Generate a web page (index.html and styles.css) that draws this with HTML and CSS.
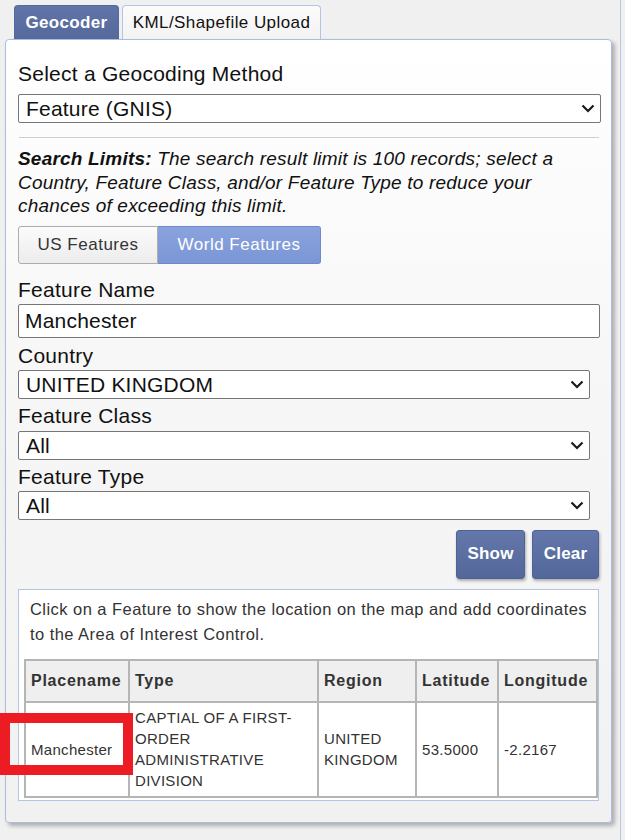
FILE: index.html
```html
<!DOCTYPE html>
<html>
<head>
<meta charset="utf-8">
<link rel="stylesheet" href="styles.css">
</head>
<body>
<div class="page">
  <div class="tabs">
    <div class="tab tab-active">Geocoder</div>
    <div class="tab">KML/Shapefile Upload</div>
  </div>
  <div class="panel">
    <div class="label label-first">Select a Geocoding Method</div>
    <div class="select-wrap select-wide">
      <select class="select"><option>Feature (GNIS)</option></select>
      <svg class="chev" width="14" height="9" viewBox="0 0 14 9"><polyline points="1.5,1.5 7,7 12.5,1.5" fill="none" stroke="#1a1a1a" stroke-width="2.2"/></svg>
    </div>
    <div class="divider"></div>
    <p class="limits"><b>Search Limits:</b> The search result limit is 100 records; select a<br>Country, Feature Class, and/or Feature Type to reduce your<br>chances of exceeding this limit.</p>
    <div class="toggle">
      <button class="tog">US Features</button>
      <button class="tog tog-on">World Features</button>
    </div>
    <div class="label label-name">Feature Name</div>
    <input class="text-input" type="text" value="Manchester">
    <div class="label label-country">Country</div>
    <div class="select-wrap">
      <select class="select"><option>UNITED KINGDOM</option></select>
      <svg class="chev" width="14" height="9" viewBox="0 0 14 9"><polyline points="1.5,1.5 7,7 12.5,1.5" fill="none" stroke="#1a1a1a" stroke-width="2.2"/></svg>
    </div>
    <div class="label label-class">Feature Class</div>
    <div class="select-wrap">
      <select class="select"><option>All</option></select>
      <svg class="chev" width="14" height="9" viewBox="0 0 14 9"><polyline points="1.5,1.5 7,7 12.5,1.5" fill="none" stroke="#1a1a1a" stroke-width="2.2"/></svg>
    </div>
    <div class="label label-type">Feature Type</div>
    <div class="select-wrap">
      <select class="select"><option>All</option></select>
      <svg class="chev" width="14" height="9" viewBox="0 0 14 9"><polyline points="1.5,1.5 7,7 12.5,1.5" fill="none" stroke="#1a1a1a" stroke-width="2.2"/></svg>
    </div>
    <div class="actions">
      <button class="btn btn-show">Show</button>
      <button class="btn btn-clear">Clear</button>
    </div>
    <div class="results">
      <p class="hint">Click on a Feature to show the location on the map and add coordinates<br>to the Area of Interest Control.</p>
      <table class="grid">
        <colgroup>
          <col class="c1"><col class="c2"><col class="c3"><col class="c4"><col class="c5">
        </colgroup>
        <thead>
          <tr><th>Placename</th><th>Type</th><th>Region</th><th>Latitude</th><th>Longitude</th></tr>
        </thead>
        <tbody>
          <tr>
            <td>Manchester</td>
            <td>CAPTIAL OF A FIRST-ORDER ADMINISTRATIVE DIVISION</td>
            <td>UNITED KINGDOM</td>
            <td>53.5000</td>
            <td>-2.2167</td>
          </tr>
        </tbody>
      </table>
    </div>
  </div>
  <div class="annotation"></div>
</div>
</body>
</html>
```

FILE: styles.css
```css
* { box-sizing: border-box; }
html, body { margin: 0; padding: 0; background: #f0f0f0; }
body { font-family: "Liberation Sans", Arial, sans-serif; color: #111; }

.page {
  position: relative;
  width: 621px;
  min-height: 840px;
  padding: 5px 0 0 5px;
  border-right: 1px solid #b7c6e6;
}

.tabs {
  display: flex;
  gap: 3px;
  margin-left: 9px;
  height: 34px;
  position: relative;
  z-index: 2;
}
.tab {
  height: 34px;
  padding: 0 8px;
  font-size: 17px;
  letter-spacing: 0.42px;
  line-height: 33px;
  white-space: nowrap;
  text-align: center;
  border: 1px solid #b4c4e4;
  border-bottom: none;
  border-radius: 4px 4px 0 0;
  background: linear-gradient(#fbfbfb, #f3f3f3);
  color: #111;
  width: 199px;
}
.tab-active {
  width: 105px;
  font-weight: bold;
  letter-spacing: 0.35px;
  color: #fff;
  background: linear-gradient(#6074a8, #55699b);
  border-color: #5369a0;
}

.panel {
  position: relative;
  width: 607px;
  height: 784px;
  border: 1px solid #a9bde4;
  border-radius: 4px;
  background: linear-gradient(#ffffff 0%, #f7f7f7 40%, #f1f1f1 100%);
  box-shadow: 3px 3px 4px rgba(0,0,0,0.28);
  padding: 22px 11px 0 12px;
  display: flex;
  flex-direction: column;
  align-items: flex-start;
}

.label {
  font-size: 21px;
  letter-spacing: 0.25px;
  line-height: 24px;
  color: #111;
}
.label-first { margin-bottom: 8px; }
.label-name { margin-top: 14px; margin-bottom: 2px; }
.label-country { margin-top: 6px; margin-bottom: 2px; }
.label-class { margin-top: 5px; margin-bottom: 3px; }
.label-type { margin-top: 5px; margin-bottom: 2px; }

.select-wrap {
  position: relative;
  width: 572px;
  height: 29px;
}
.select-wide { width: 583px; }
.select {
  appearance: none;
  -webkit-appearance: none;
  width: 100%;
  height: 29px;
  margin: 0;
  padding: 0 30px 0 7px;
  border: 1px solid #767676;
  border-radius: 2px;
  background: #fff;
  font-family: "Liberation Sans", Arial, sans-serif;
  font-size: 21px;
  letter-spacing: 0.2px;
  line-height: 27px;
  color: #111;
}
.chev {
  position: absolute;
  right: 6px;
  top: 10px;
}

.divider {
  width: 580px;
  margin-left: 1px;
  margin-top: 14px;
  border-top: 1px solid #cfcfcf;
}

.limits {
  margin: 9px 0 0 0;
  font-size: 19px;
  letter-spacing: 0.2px;
  line-height: 23.5px;
  font-style: italic;
  color: #111;
}

.toggle {
  display: flex;
  margin-top: 8px;
  height: 38px;
}
.tog {
  margin: 0;
  height: 38px;
  font-family: "Liberation Sans", Arial, sans-serif;
  font-size: 17px;
  letter-spacing: 0.5px;
  padding: 0;
  width: 140px;
  border: 1px solid #adadad;
  border-radius: 3px 0 0 3px;
  background: linear-gradient(#fbfbfb, #ececec);
  color: #333;
}
.tog-on {
  width: 163px;
  border: 1px solid #6f8acb;
  border-left: none;
  border-radius: 0 3px 3px 0;
  background: linear-gradient(#8aa3de, #7b96d6);
  color: #fff;
}

.text-input {
  width: 582px;
  height: 34px;
  margin: 0;
  padding: 0 6px;
  border: 1px solid #767676;
  border-radius: 2px;
  background: #fff;
  font-family: "Liberation Sans", Arial, sans-serif;
  font-size: 21px;
  letter-spacing: 0.2px;
  color: #111;
}

.actions {
  align-self: stretch;
  display: flex;
  justify-content: flex-end;
  gap: 7px;
  margin-top: 10px;
  padding-right: 1px;
}
.btn {
  height: 49px;
  margin: 0;
  padding: 0;
  font-family: "Liberation Sans", Arial, sans-serif;
  font-size: 17px;
  font-weight: bold;
  letter-spacing: 0.2px;
  color: #fff;
  border: 1px solid #4f6395;
  border-radius: 3px;
  background: linear-gradient(#6377ab, #53679a);
  box-shadow: 1px 2px 3px rgba(0,0,0,0.3);
}
.btn-show { width: 69px; }
.btn-clear { width: 67px; }

.results {
  margin-top: 10px;
  width: 581px;
  height: 212px;
  border: 1px solid #b3c4e4;
  background: #fff;
  padding: 5px;
}
.hint {
  margin: 2px 0 12px 0;
  padding-left: 6px;
  font-size: 16.5px;
  letter-spacing: 0.45px;
  line-height: 25px;
  color: #333;
  white-space: nowrap;
}

.grid {
  width: 572px;
  border-collapse: collapse;
  table-layout: fixed;
  font-size: 15px;
  letter-spacing: 0.3px;
  color: #333;
}
.c1 { width: 104px; }
.c2 { width: 189px; }
.c3 { width: 98px; }
.c4 { width: 82px; }
.c5 { width: 99px; }
.grid th, .grid td {
  border: 2px solid #b5b5b5;
  text-align: left;
  vertical-align: middle;
  padding: 0 5px;
}
.grid th {
  height: 42px;
  background: #efefef;
  font-weight: bold;
  font-size: 16px;
  letter-spacing: 0.75px;
  line-height: 18px;
  white-space: nowrap;
}
.grid td {
  height: 95px;
  line-height: 21px;
  background: #fff;
}

.annotation {
  position: absolute;
  left: 0;
  top: 713px;
  width: 133px;
  height: 62px;
  border: 10px solid #ed1c24;
}
```
